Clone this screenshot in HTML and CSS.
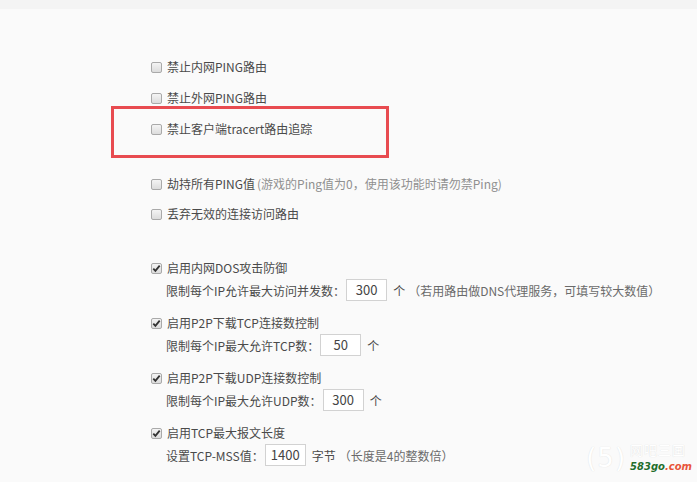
FILE: index.html
```html
<!DOCTYPE html>
<html lang="zh-CN">
    <head>
        <meta charset="utf-8">
        <meta name="viewport" content="width=device-width, initial-scale=1.0">
        <title>安全设置</title>
        <link rel="stylesheet" href="styles.css">
    </head>
    <body>
        <div class="topbar"></div>
        <div class="settings">
            <div class="block">
                <label class="row"><span class="cb"></span>禁止内网PING路由</label>
                <label class="row"><span class="cb"></span>禁止外网PING路由</label>
                <label class="row marked"><span class="cb"></span>禁止客户端tracert路由追踪<span class="mark"></span></label>
            </div>
            <div class="block">
                <label class="row"><span class="cb"></span>劫持所有PING值<span class="hint light">(游戏的Ping值为0，使用该功能时请勿禁Ping)</span></label>
                <label class="row"><span class="cb"></span>丢弃无效的连接访问路由</label>
            </div>
            <div class="group">
                <label class="row"><span class="cb on"><svg viewBox="0 0 11 11" width="11" height="11"><path d="M2.3 5.6 L4.4 7.9 L8.7 2.6" fill="none" stroke="#333" stroke-width="1.8"/></svg></span>启用内网DOS攻击防御</label>
                <div class="sub">限制每个IP允许最大访问并发数：<span class="num">300</span><span class="unit">个</span><span class="hint">（若用路由做DNS代理服务，可填写较大数值）</span></div>
            </div>
            <div class="group">
                <label class="row"><span class="cb on"><svg viewBox="0 0 11 11" width="11" height="11"><path d="M2.3 5.6 L4.4 7.9 L8.7 2.6" fill="none" stroke="#333" stroke-width="1.8"/></svg></span>启用P2P下载TCP连接数控制</label>
                <div class="sub">限制每个IP最大允许TCP数：<span class="num">50</span><span class="unit">个</span></div>
            </div>
            <div class="group">
                <label class="row"><span class="cb on"><svg viewBox="0 0 11 11" width="11" height="11"><path d="M2.3 5.6 L4.4 7.9 L8.7 2.6" fill="none" stroke="#333" stroke-width="1.8"/></svg></span>启用P2P下载UDP连接数控制</label>
                <div class="sub">限制每个IP最大允许UDP数：<span class="num">300</span><span class="unit">个</span></div>
            </div>
            <div class="group">
                <label class="row"><span class="cb on"><svg viewBox="0 0 11 11" width="11" height="11"><path d="M2.3 5.6 L4.4 7.9 L8.7 2.6" fill="none" stroke="#333" stroke-width="1.8"/></svg></span>启用TCP最大报文长度</label>
                <div class="sub">设置TCP-MSS值：<span class="num">1400</span><span class="unit">字节</span><span class="hint">（长度是4的整数倍）</span></div>
            </div>
        </div>
        <div class="watermark">
            <span class="logo">(5)</span>
            <span class="site">
                <span class="cn">网吧三国</span>
                <span class="url"><b>583go</b><i>.com</i></span>
            </span>
        </div>
    </body>
</html>
```

FILE: styles.css
```css
body {
    margin: 0;
    background-color: #fafafa;
    color: #4a4a4a;
    font-family: "Noto Sans CJK SC", "Liberation Sans", sans-serif;
    font-size: 12px;
    width: 697px;
    height: 482px;
    overflow: hidden;
    position: relative;
}

.topbar {
    height: 9px;
    background-color: #f4f4f4;
}

.settings {
    padding: 48px 0 0 151px;
}

.block {
    display: flex;
    flex-direction: column;
    gap: 11px;
    margin-bottom: 35px;
}

.block + .block {
    gap: 10px;
    margin-bottom: 34px;
}

.row {
    display: flex;
    align-items: center;
    height: 20px;
    line-height: 20px;
    white-space: nowrap;
}

.cb {
    width: 9px;
    height: 9px;
    border: 1px solid #a9a9a9;
    border-radius: 2px;
    background: linear-gradient(#f4f4f4, #dcdcdc);
    margin-right: 5px;
    position: relative;
    flex: none;
}

.cb svg {
    position: absolute;
    left: -1px;
    top: -1px;
}

.marked {
    position: relative;
}

.mark {
    position: absolute;
    left: -40px;
    top: -13px;
    width: 272px;
    height: 46px;
    border: 3px solid #e84b50;
}

.hint {
    color: #6a6a6a;
}

.light {
    color: #909090;
    margin-left: 2px;
}

.group {
    margin-bottom: 12px;
}

.sub {
    display: flex;
    align-items: center;
    height: 22px;
    margin-top: 1px;
    padding-left: 15px;
    white-space: nowrap;
}

.num {
    width: 39px;
    height: 20px;
    border: 1px solid #d2d2d2;
    background-color: #fff;
    text-align: center;
    line-height: 20px;
    font-size: 13px;
    color: #444;
    margin-left: 1px;
    margin-right: 6px;
}

.unit {
    margin-right: 3px;
}

.watermark {
    position: absolute;
    right: 5px;
    bottom: 9px;
    display: flex;
    align-items: flex-end;
    gap: 4px;
}

.logo {
    font-size: 26px;
    line-height: 30px;
    color: #fff;
    text-shadow: 0 0 1px #d8d8d8;
    font-family: "DejaVu Sans", sans-serif;
    letter-spacing: 1px;
}

.site {
    display: flex;
    flex-direction: column;
    gap: 4px;
}

.cn {
    color: #fff;
    text-shadow: 0 0 1px #d4d4d4;
    font-size: 13px;
    line-height: 14px;
    height: 14px;
    letter-spacing: 1px;
}

.url {
    font-family: "DejaVu Sans", sans-serif;
    font-size: 10px;
    line-height: 12px;
    height: 12px;
    font-style: italic;
}

.url b {
    color: #1f6e2c;
}

.url i {
    color: #e8553a;
    font-weight: bold;
}
```
